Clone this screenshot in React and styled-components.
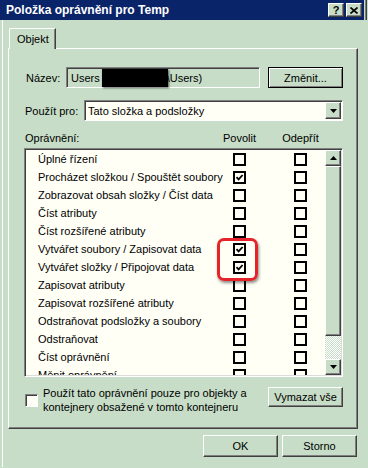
import styled, { createGlobalStyle, css } from "styled-components"

const FACE = "#c7ddc7"
const CREAM = "#fffff6"

const GlobalStyle = createGlobalStyle`
  html, body {
    margin: 0;
    padding: 0;
    background: ${FACE};
  }
  body {
    font-family: "Liberation Sans", Arial, sans-serif;
    font-size: 11px;
    color: #000;
  }
  * {
    box-sizing: border-box;
  }
`

const raised = css`
  border: 1px solid;
  border-color: #fff #404040 #404040 #fff;
  box-shadow: inset -1px -1px #808080;
  background: ${FACE};
`

const sunken = css`
  border: 1px solid;
  border-color: #808080 #fff #fff #808080;
  box-shadow: inset 1px 1px #404040;
`

const Window = styled.div`
  width: 368px;
  height: 468px;
  display: flex;
  flex-direction: column;
  background: ${FACE};
  border-right: 1px solid ${FACE};
  border-bottom: 1px solid ${FACE};
  box-shadow: inset -1px -1px #404040, inset -2px -2px #808080;
  overflow: hidden;
`

const TitleBar = styled.div`
  height: 20px;
  margin-right: 3px;
  background: #0a246a;
  color: #fff;
  display: flex;
  align-items: center;
  padding: 0 2px 0 6px;
  font-weight: bold;
  font-size: 12px;

  .caption {
    flex: 1;
  }
`

const CaptionButton = styled.div`
  ${raised}
  width: 16px;
  height: 14px;
  margin-left: 2px;
  display: flex;
  align-items: center;
  justify-content: center;
  color: #000;
  font-weight: bold;
  font-size: 11px;
  line-height: 1;
`

const Body = styled.div`
  flex: 1;
  display: flex;
  flex-direction: column;
  padding: 8px 0 0 8px;
  background: linear-gradient(to right, ${FACE} 2px, #fff 2px 3px, ${FACE} 3px);
`

const TabStrip = styled.div`
  display: flex;
  padding-left: 1px;
  height: 20px;
`

const Tab = styled.div`
  position: relative;
  z-index: 1;
  width: 47px;
  height: 21px;
  background: ${FACE};
  border-top: 1px solid #fff;
  border-left: 1px solid #fff;
  border-right: 1px solid #404040;
  border-top-left-radius: 2px;
  box-shadow: inset -1px 0 #808080;
  padding: 4px 0 0 7px;
`

const Panel = styled.div`
  width: 350px;
  height: 381px;
  border: 1px solid;
  border-color: #fff #404040 #404040 #fff;
  box-shadow: inset -1px -1px #808080;
  padding: 18px 14px 0 15px;
  display: flex;
  flex-direction: column;
`

const FieldRow = styled.div`
  display: flex;
  align-items: center;
  height: 21px;
  margin-top: ${props => props.$gap || 0}px;
`

const Label = styled.div`
  width: ${props => props.$width}px;
  padding-left: ${props => props.$indent || 1}px;
  white-space: nowrap;
`

const NameField = styled.div`
  ${sunken}
  width: 194px;
  height: 21px;
  background: ${FACE};
  display: flex;
  align-items: center;
  padding-left: 4px;
  white-space: nowrap;
`

const Redacted = styled.span`
  display: inline-block;
  width: 66px;
  height: 18px;
  margin: 0 -1px 0 2px;
  background: #000;
  box-shadow: 1px 1px 2px rgba(0, 0, 0, 0.6);
`

const Button = styled.div`
  ${raised}
  width: ${props => props.$width || 75}px;
  height: ${props => props.$height || 21}px;
  margin-left: ${props => props.$gap || 0}px;
  display: flex;
  align-items: center;
  justify-content: center;
  ${props => props.$default && css`
    border: 1px solid #000;
    box-shadow: inset 1px 1px #fff, inset -1px -1px #808080;
  `}
`

const Select = styled.div`
  ${sunken}
  width: 259px;
  height: 21px;
  background: ${CREAM};
  display: flex;
  align-items: center;
  padding: 1px 1px 1px 3px;

  .value {
    flex: 1;
  }
`

const DropButton = styled.div`
  ${raised}
  width: 16px;
  height: 17px;
  display: flex;
  align-items: center;
  justify-content: center;
`

const HeaderRow = styled.div`
  display: grid;
  grid-template-columns: 194px 43px 18px 43px;
  height: 14px;
  margin-top: 10px;
  align-items: center;

  span {
    text-align: center;
  }

  span:first-child {
    text-align: left;
    padding-left: 1px;
  }
`

const List = styled.div`
  position: relative;
  margin-top: 3px;
  height: 229px;
  border: 1px solid;
  border-color: #808080 #fff #fff #808080;
  box-shadow: inset 1px 1px #404040, inset -1px -1px #dcdcdc;
  padding: 1px;
  background: ${CREAM};
  display: flex;
`

const Rows = styled.div`
  flex: 1;
  overflow: hidden;
`

const Row = styled.div`
  display: grid;
  grid-template-columns: 195px 13px 48px 13px;
  align-items: center;
  height: 18px;
  padding-left: 12px;
  white-space: nowrap;
`

const Box = styled.div`
  width: 13px;
  height: 13px;
  border: 2px solid #000;
  background: ${CREAM};
  display: flex;
  align-items: center;
  justify-content: center;
`

const Highlight = styled.div`
  position: absolute;
  left: 192px;
  top: 89px;
  width: 41px;
  height: 43px;
  border: 3px solid #e4232a;
  border-radius: 7px;
  box-shadow: 1px 2px 3px rgba(0, 0, 0, 0.45);
`

const ScrollBar = styled.div`
  width: 16px;
  display: flex;
  flex-direction: column;
`

const ScrollButton = styled.div`
  ${raised}
  width: 16px;
  height: 16px;
  display: flex;
  align-items: center;
  justify-content: center;
`

const Thumb = styled.div`
  ${raised}
  height: 170px;
`

const Track = styled.div`
  flex: 1;
  background: repeating-conic-gradient(#fff 0 25%, ${FACE} 0 50%) 0 0 / 2px 2px;
`

const BottomRow = styled.div`
  display: flex;
  align-items: flex-start;
  margin-top: 9px;
  line-height: 14px;
`

const SunkenBox = styled.div`
  ${sunken}
  flex: none;
  width: 13px;
  height: 13px;
  margin: 8px 0 0 1px;
  background: ${CREAM};
`

const Note = styled.div`
  margin-left: 5px;
  width: 218px;
`

const Footer = styled.div`
  width: 350px;
  display: flex;
  justify-content: flex-end;
  gap: 4px;
  padding-right: 1px;
  margin-top: 6px;
`

const Arrow = ({ up }) => (
  <svg width="7" height="4" viewBox="0 0 7 4">
    <polygon points={up ? "3.5,0 7,4 0,4" : "0,0 7,0 3.5,4"} fill="#000" />
  </svg>
)

const Check = () => (
  <svg width="9" height="9" viewBox="0 0 9 9">
    <path d="M1.5 4.2 L3.6 6.4 L7.6 2" stroke="#000" strokeWidth="1.8" fill="none" />
  </svg>
)

const permissions = [
  ["Úplné řízení", false],
  ["Procházet složkou / Spouštět soubory", true],
  ["Zobrazovat obsah složky / Číst data", false],
  ["Číst atributy", false],
  ["Číst rozšířené atributy", false],
  ["Vytvářet soubory / Zapisovat data", true],
  ["Vytvářet složky / Připojovat data", true],
  ["Zapisovat atributy", false],
  ["Zapisovat rozšířené atributy", false],
  ["Odstraňovat podsložky a soubory", false],
  ["Odstraňovat", false],
  ["Číst oprávnění", false],
  ["Měnit oprávnění", false],
]

function App() {
  return (
    <>
      <GlobalStyle />
      <Window>
        <TitleBar>
          <span className="caption">Položka oprávnění pro Temp</span>
          <CaptionButton>?</CaptionButton>
          <CaptionButton>
            <svg width="8" height="7" viewBox="0 0 8 7">
              <path d="M0.5 0.5 L7.5 6.5 M7.5 0.5 L0.5 6.5" stroke="#000" strokeWidth="1.6" />
            </svg>
          </CaptionButton>
        </TitleBar>

        <Body>
          <TabStrip>
            <Tab>Objekt</Tab>
          </TabStrip>

          <Panel>
            <FieldRow>
              <Label $width={42} $indent={2}>Název:</Label>
              <NameField>
                Users <Redacted />\Users)
              </NameField>
              <Button $default $gap={8}>Změnit...</Button>
            </FieldRow>

            <FieldRow $gap={12}>
              <Label $width={60}>Použít pro:</Label>
              <Select>
                <span className="value">Tato složka a podsložky</span>
                <DropButton><Arrow /></DropButton>
              </Select>
            </FieldRow>

            <HeaderRow>
              <span>Oprávnění:</span>
              <span>Povolit</span>
              <span />
              <span>Odepřít</span>
            </HeaderRow>

            <List>
              <Rows>
                {permissions.map(([name, allowed]) => (
                  <Row key={name}>
                    <span>{name}</span>
                    <Box>{allowed && <Check />}</Box>
                    <span />
                    <Box />
                  </Row>
                ))}
              </Rows>
              <ScrollBar>
                <ScrollButton><Arrow up /></ScrollButton>
                <Thumb />
                <Track />
                <ScrollButton><Arrow /></ScrollButton>
              </ScrollBar>
              <Highlight />
            </List>

            <BottomRow>
              <SunkenBox />
              <Note>
                Použít tato oprávnění pouze pro objekty a kontejnery obsažené v tomto kontejneru
              </Note>
              <Button $width={75} $height={20} style={{ marginLeft: "auto", marginTop: "1px" }}>
                Vymazat vše
              </Button>
            </BottomRow>
          </Panel>

          <Footer>
            <Button $height={22}>OK</Button>
            <Button $height={22}>Storno</Button>
          </Footer>
        </Body>
      </Window>
    </>
  )
}

export default App
